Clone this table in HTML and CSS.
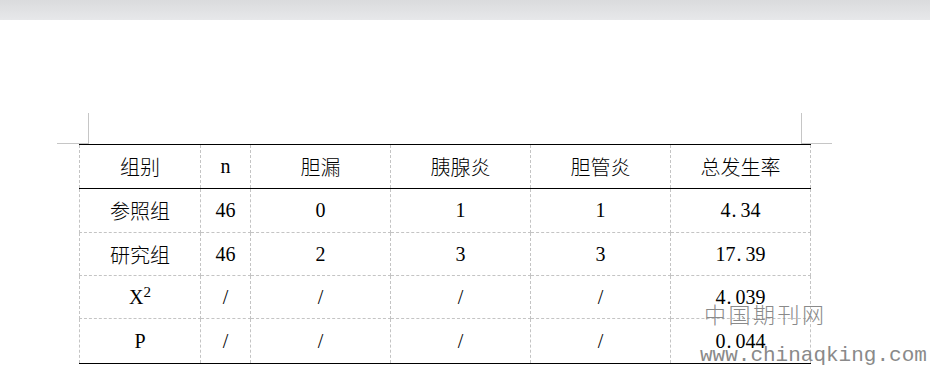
FILE: index.html
```html
<!DOCTYPE html>
<html lang="zh-CN">
<head>
<meta charset="utf-8">
<title>表格</title>
<link rel="stylesheet" href="styles.css">
</head>
<body>
<div class="topbar"></div>
<div class="sheet">
  <div class="marks">
    <span class="mark mark-left"></span>
    <span class="mark mark-right"></span>
  </div>
  <table class="data">
    <colgroup>
      <col class="c-group"><col class="c-n"><col class="c-w"><col class="c-w"><col class="c-w"><col class="c-w">
    </colgroup>
    <thead>
      <tr class="head"><th>组别</th><th class="lat">n</th><th>胆漏</th><th>胰腺炎</th><th>胆管炎</th><th>总发生率</th></tr>
    </thead>
    <tbody>
      <tr class="r1"><td>参照组</td><td>46</td><td>0</td><td>1</td><td>1</td><td>4<span class="pt">.</span>34</td></tr>
      <tr class="r2"><td>研究组</td><td>46</td><td>2</td><td>3</td><td>3</td><td>17<span class="pt">.</span>39</td></tr>
      <tr class="r3"><td class="lat">X<sup>2</sup></td><td>/</td><td>/</td><td>/</td><td>/</td><td>4<span class="pt">.</span>039</td></tr>
      <tr class="r4"><td class="lat">P</td><td>/</td><td>/</td><td>/</td><td>/</td><td>0<span class="pt">.</span>044</td></tr>
    </tbody>
  </table>
</div>
<div class="watermark">
  <div class="wm-cn">中国期刊网</div>
  <div class="wm-url">www.chinaqking.com</div>
</div>
</body>
</html>
```
FILE: styles.css
```css
html, body {
  margin: 0;
  padding: 0;
  background: #ffffff;
}
body {
  width: 930px;
  height: 371px;
  overflow: hidden;
  position: relative;
  font-family: "Liberation Serif", "Noto Sans CJK SC", serif;
  color: #000;
}
.topbar {
  height: 20px;
  background: linear-gradient(#dadbdd, #e7e8ea);
}
.sheet {
  margin-left: 57px;
  width: 775px;
  padding-top: 93px;
}
.marks {
  display: flex;
  justify-content: space-between;
  height: 31px;
}
.mark {
  box-sizing: border-box;
  height: 31px;
  border-bottom: 1px solid #c6c6c6;
}
.mark-left {
  width: 32px;
  border-right: 1px solid #c6c6c6;
}
.mark-right {
  width: 31px;
  border-left: 1px solid #c6c6c6;
}
.data {
  margin-left: 22px;
  width: 731px;
  border-collapse: collapse;
  table-layout: fixed;
  font-size: 20px;
  font-weight: 300;
}
.c-group { width: 121px; }
.c-n { width: 50px; }
.c-w { width: 140px; }
.data th, .data td {
  padding: 0;
  text-align: center;
  vertical-align: middle;
  font-weight: 300;
  border-left: 1px dashed #c4c4c4;
  border-right: 1px dashed #c4c4c4;
  border-bottom: 1px dashed #c4c4c4;
}
.data thead tr { height: 44px; }
.data thead th {
  border-top: 1px solid #000;
  border-bottom: 1px solid #000;
}
.r1 { height: 44px; }
.r2 { height: 43px; }
.r3 { height: 43px; }
.r4 { height: 45px; }
.data tr.r4 td {
  border-bottom: 1px solid #000;
}
.lat {
  font-family: "Liberation Serif", serif;
}
.data sup {
  font-size: 15px;
  vertical-align: 7px;
  line-height: 0;
}
.pt {
  display: inline-block;
  width: 0.5em;
  text-align: left;
  padding-left: 1px;
  box-sizing: border-box;
}
.watermark {
  position: absolute;
  left: 700px;
  top: 299px;
  color: #8a8a8a;
  pointer-events: none;
}
.wm-cn {
  margin-left: 4px;
  font-family: "Noto Sans CJK SC", sans-serif;
  font-size: 22px;
  line-height: 28px;
  letter-spacing: 2.5px;
  font-weight: 300;
}
.wm-url {
  margin-top: 17px;
  font-family: "Liberation Mono", monospace;
  font-size: 21px;
  line-height: 24px;
  white-space: nowrap;
}
```
